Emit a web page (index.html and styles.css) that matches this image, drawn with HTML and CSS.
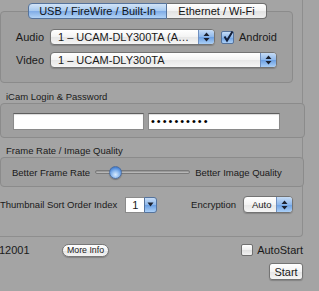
FILE: index.html
```html
<!DOCTYPE html>
<html>
<head>
    <link rel="stylesheet" href="styles.css">
</head>
<body>
    <div class="outer">
        <div class="tabview">
            <div class="tabs">
                <div class="tab selected">USB / FireWire / Built-In</div>
                <div class="tab">Ethernet / Wi-Fi</div>
            </div>
            <div class="panel">
                <div class="devrow">
                    <span class="rlabel">Audio</span>
                    <div class="popup audio">
                        <span class="ptext">1 – UCAM-DLY300TA (A…</span>
                        <span class="arrows">
                            <svg width="7" height="10" viewBox="0 0 7 10"><path d="M3.5 0.5 L6.5 4 L0.5 4 Z M3.5 9.5 L6.5 6 L0.5 6 Z" fill="#1c2230"/></svg>
                        </span>
                    </div>
                    <div class="check">
                        <span class="box checked">
                            <svg width="12" height="12" viewBox="0 0 12 12"><path d="M2.5 5.5 L5 9.5 L10.5 0.5" fill="none" stroke="#14203a" stroke-width="2"/></svg>
                        </span>
                        <span>Android</span>
                    </div>
                </div>
                <div class="devrow">
                    <span class="rlabel">Video</span>
                    <div class="popup video">
                        <span class="ptext">1 – UCAM-DLY300TA</span>
                        <span class="arrows">
                            <svg width="7" height="10" viewBox="0 0 7 10"><path d="M3.5 0.5 L6.5 4 L0.5 4 Z M3.5 9.5 L6.5 6 L0.5 6 Z" fill="#1c2230"/></svg>
                        </span>
                    </div>
                </div>
            </div>
        </div>

        <div class="glabel">iCam Login &amp; Password</div>
        <div class="group login">
            <div class="field"></div>
            <div class="field pw">••••••••••</div>
        </div>

        <div class="glabel">Frame Rate / Image Quality</div>
        <div class="group quality">
            <span>Better Frame Rate</span>
            <div class="slider">
                <div class="track"></div>
                <div class="thumb"></div>
            </div>
            <span>Better Image Quality</span>
        </div>

        <div class="sortrow">
            <span>Thumbnail Sort Order Index</span>
            <div class="combo">
                <span class="cval">1</span>
                <span class="cbtn">
                    <svg width="7" height="5" viewBox="0 0 7 5"><path d="M0.5 0.5 L6.5 0.5 L3.5 4.5 Z" fill="#1c2230"/></svg>
                </span>
            </div>
            <span class="enclabel">Encryption</span>
            <div class="popup small">
                <span class="ptext">Auto</span>
                <span class="arrows">
                    <svg width="7" height="10" viewBox="0 0 7 10"><path d="M3.5 0.5 L6.5 4 L0.5 4 Z M3.5 9.5 L6.5 6 L0.5 6 Z" fill="#1c2230"/></svg>
                </span>
            </div>
        </div>
    </div>

    <div class="footer">
        <div class="footrow">
            <span class="port">12001</span>
            <button class="pill">More Info</button>
            <div class="check auto">
                <span class="box"></span>
                <span>AutoStart</span>
            </div>
        </div>
        <div class="startrow">
            <button class="push">Start</button>
        </div>
    </div>
</body>
</html>
```

FILE: styles.css
```css
body {
    margin: 0;
    width: 319px;
    height: 291px;
    overflow: hidden;
    background: #a4a4a4;
    font-family: "Liberation Sans", Arial, sans-serif;
    font-size: 11px;
    color: #1a1a1a;
}
.outer {
    width: 302px;
    padding-top: 3px;
    height: 233px;
    border-right: 1px solid #8e8e8e;
    border-bottom: 1px solid #8e8e8e;
    border-bottom-right-radius: 4px;
}
.tabs {
    display: flex;
    margin-left: 28px;
    position: relative;
    z-index: 1;
}
.tab {
    height: 14px;
    line-height: 14px;
    text-align: center;
    border: 1px solid #6e6e6e;
    background: linear-gradient(#ffffff, #f2f2f2 50%, #e2e2e2 51%, #f0f0f0);
    color: #141414;
}
.tab.selected {
    width: 137px;
    border-radius: 4px 0 0 4px;
    border-color: #55739c;
    color: #101520;
    background: linear-gradient(#d2e4f7, #a6c9f0 50%, #7eabe6 51%, #b2d3f6);
}
.tab:last-child {
    width: 99px;
    border-left: none;
    border-radius: 0 4px 4px 0;
}
.panel {
    width: 291px;
    margin-top: -8px;
    padding: 17px 0 14px;
    border: 1px solid #8b8b8b;
    border-radius: 4px;
    background: #9f9f9f;
}
.devrow {
    display: flex;
    align-items: center;
    height: 16px;
    margin-bottom: 7px;
}
.devrow:last-child {
    margin-bottom: 0;
}
.rlabel {
    width: 43px;
    text-align: right;
    margin-right: 6px;
}
.popup {
    display: flex;
    height: 14px;
    border: 1px solid #737373;
    border-radius: 4px;
    background: linear-gradient(#ffffff, #f3f3f3 50%, #e6e6e6 51%, #f5f5f5);
    box-shadow: 0 1px 1px rgba(0, 0, 0, 0.18);
    overflow: hidden;
}
.popup.audio {
    width: 163px;
}
.popup.video {
    width: 225px;
}
.popup.small {
    width: 48px;
    height: 15px;
    margin-left: 7px;
}
.ptext {
    flex: 1;
    padding-left: 7px;
    line-height: 14px;
    white-space: nowrap;
    overflow: hidden;
}
.popup.small .ptext {
    font-size: 9.5px;
    padding-left: 8px;
    line-height: 15px;
}
.arrows {
    width: 15px;
    display: flex;
    align-items: center;
    justify-content: center;
    border-left: 1px solid #6f8fbf;
    background: linear-gradient(#c6dcf6, #8db7eb 50%, #6a9fe3 51%, #abcff6);
}
.check {
    display: flex;
    align-items: center;
    margin-left: 6px;
}
.box {
    width: 10px;
    height: 10px;
    margin-right: 5px;
    border: 1px solid #707070;
    border-radius: 2px;
    background: linear-gradient(#ffffff, #eeeeee 50%, #e0e0e0 51%, #f2f2f2);
    position: relative;
}
.box.checked {
    width: 11px;
    height: 11px;
    border-color: #55739c;
    background: linear-gradient(#c6dcf6, #8db7eb 50%, #6a9fe3 51%, #abcff6);
}
.box svg {
    position: absolute;
    left: 0;
    top: -1px;
}
.glabel {
    margin-top: 8px;
    padding-left: 6px;
    font-size: 9.5px;
    line-height: 12px;
}
.group {
    width: 291px;
    border: 1px solid #8b8b8b;
    border-radius: 4px;
    background: #9f9f9f;
}
.login {
    display: flex;
    gap: 4px;
    padding: 9px 0 7px 12px;
}
.field {
    width: 129px;
    height: 15px;
    background: #fff;
    border: 1px solid #8a8a8a;
    border-top-color: #5e5e5e;
    box-shadow: inset 0 1px 1px rgba(0, 0, 0, 0.15);
}
.field.pw {
    padding-left: 2px;
    width: 128px;
    font-size: 11px;
    line-height: 15px;
    letter-spacing: 2px;
    color: #000;
}
.login + .glabel {
    margin-top: 7px;
}
.quality {
    display: flex;
    align-items: center;
    height: 14px;
    padding: 7px 0 7px 11px;
    font-size: 9.5px;
    gap: 5px;
}
.slider {
    position: relative;
    width: 95px;
    height: 14px;
}
.track {
    margin-top: 5px;
    height: 2px;
    border: 1px solid #7a7a7a;
    border-radius: 2px;
    background: linear-gradient(#8c8c8c, #c4c4c4);
}
.thumb {
    position: absolute;
    left: 14px;
    top: 1px;
    width: 11px;
    height: 11px;
    border: 1px solid #4f6f9e;
    border-radius: 50%;
    background: radial-gradient(circle at 50% 70%, #d8ebff, #84b3ec 45%, #3f7bd0 80%);
    box-shadow: 0 1px 1px rgba(0, 0, 0, 0.25);
}
.sortrow {
    display: flex;
    align-items: center;
    width: 293px;
    margin-top: 9px;
    font-size: 9.5px;
}
.combo {
    display: flex;
    height: 16px;
    margin-left: 8px;
}
.cval {
    width: 18px;
    border: 1px solid #8a8a8a;
    border-right: none;
    background: #fff;
    font-size: 11px;
    line-height: 14px;
    text-align: center;
}
.cbtn {
    width: 11px;
    display: flex;
    align-items: center;
    justify-content: center;
    border: 1px solid #55739c;
    border-radius: 0 3px 3px 0;
    background: linear-gradient(#c6dcf6, #8db7eb 50%, #6a9fe3 51%, #abcff6);
}
.enclabel {
    margin-left: auto;
}
.footer {
    width: 303px;
}
.footrow {
    display: flex;
    align-items: center;
    height: 14px;
    margin-top: 6px;
}
.port {
    width: 63px;
    margin-left: -1px;
}
button {
    font-family: "Liberation Sans", Arial, sans-serif;
    color: #1a1a1a;
    padding: 0;
    cursor: pointer;
}
.pill {
    width: 47px;
    height: 13px;
    font-size: 8.8px;
    line-height: 11px;
    border: 1px solid #777;
    border-radius: 7px;
    background: linear-gradient(#ffffff, #f2f2f2 50%, #e3e3e3 51%, #f4f4f4);
    box-shadow: 0 1px 1px rgba(0, 0, 0, 0.2);
}
.check.auto {
    margin-left: auto;
}
.check.auto .box {
    margin-right: 4px;
}
.startrow {
    display: flex;
    justify-content: flex-end;
    margin-top: 6px;
}
.push {
    width: 34px;
    height: 17px;
    font-size: 11px;
    border: 1px solid #747474;
    border-radius: 3px;
    background: linear-gradient(#ffffff, #f3f3f3 50%, #e4e4e4 51%, #f6f6f6);
    box-shadow: 0 1px 1px rgba(0, 0, 0, 0.2);
}
```
